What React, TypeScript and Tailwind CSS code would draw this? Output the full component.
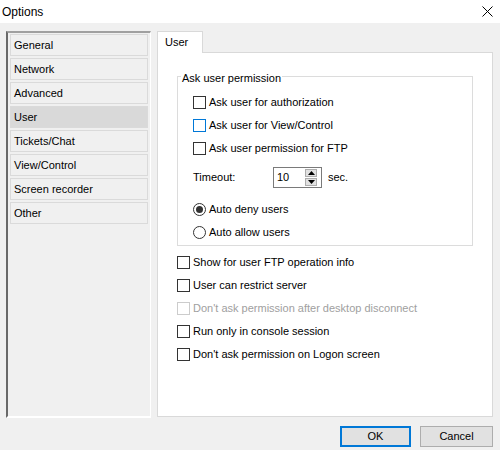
import React from "react";

const menu = [
  "General",
  "Network",
  "Advanced",
  "User",
  "Tickets/Chat",
  "View/Control",
  "Screen recorder",
  "Other",
];

function CheckBox(props: { label: string; focus?: boolean; disabled?: boolean }) {
  const { label, focus, disabled } = props;
  const box = disabled
    ? "border-[#cccccc]"
    : focus
      ? "border-[#0078d7]"
      : "border-[#333333]";
  return (
    <div className="flex h-[23px] items-center">
      <div className={`h-[13px] w-[13px] border bg-white ${box}`} />
      <span className={`ml-[3px] ${disabled ? "text-[#a0a0a0]" : ""}`}>{label}</span>
    </div>
  );
}

function Radio(props: { label: string; checked?: boolean }) {
  return (
    <div className="flex h-[23px] items-center">
      <div className="flex h-[13px] w-[13px] items-center justify-center rounded-full border border-[#333333] bg-white">
        {props.checked && <div className="h-[7px] w-[7px] rounded-full bg-[#333333]" />}
      </div>
      <span className="ml-[3px]">{props.label}</span>
    </div>
  );
}

function Spin() {
  return (
    <div className="flex h-[21px] w-[49px] items-center border border-[#7a7a7a] bg-white">
      <span className="ml-[3px] flex-1">10</span>
      <div className="mr-[4px] flex flex-col gap-[1px]">
        <div className="flex h-[8px] w-[12px] items-center justify-center border border-[#adadad] bg-[#e1e1e1]">
          <svg width="7" height="4" viewBox="0 0 7 4">
            <path d="M0 4 L3.5 0 L7 4 Z" fill="#000" />
          </svg>
        </div>
        <div className="flex h-[8px] w-[12px] items-center justify-center border border-[#adadad] bg-[#e1e1e1]">
          <svg width="7" height="4" viewBox="0 0 7 4">
            <path d="M0 0 L3.5 4 L7 0 Z" fill="#000" />
          </svg>
        </div>
      </div>
    </div>
  );
}

export default function App() {
  return (
    <div className="relative h-[450px] w-[500px] overflow-hidden bg-[#f0f0f0] font-['Liberation_Sans',Arial,sans-serif] text-[11px] text-black">
      {/* title bar */}
      <div className="flex h-[23px] items-center justify-between bg-white">
        <span className="pl-[2px] text-[12px]">Options</span>
        <svg className="mr-[7px]" width="11" height="11" viewBox="0 0 11 11">
          <path d="M0.5 0.5 L10.5 10.5 M10.5 0.5 L0.5 10.5" stroke="#000" strokeWidth="1" />
        </svg>
      </div>

      <div className="flex px-[6px]">
        {/* left list */}
        <div className="mt-[8px] flex h-[387px] w-[145px] flex-col gap-[2px] border-t-2 border-l-2 border-r border-b-2 border-t-[#a0a0a0] border-l-[#696969] border-r-[#ffffff] border-b-[#ffffff] px-[2px] pt-[1px]">
          {menu.map((m) => (
            <div
              key={m}
              className={`flex h-[22px] items-center border border-[#dadada] pl-[3px] ${m === "User" ? "bg-[#d9d9d9]" : ""}`}
            >
              {m}
            </div>
          ))}
        </div>

        {/* right tab panel */}
        <div className="ml-[6px] mt-[8px] flex flex-col">
          <div className="z-10 -mb-[1px] flex h-[22px] w-[46px] items-center border border-b-0 border-[#d9d9d9] bg-white pl-[7px]">
            User
          </div>
          <div className="h-[365px] w-[336px] border border-[#d9d9d9] bg-white pl-[19px]">
            <div className="relative mt-[23px] h-[170px] w-[296px] border border-[#dcdcdc] pl-[15px] pt-[14px]">
              <span className="absolute -top-[7px] left-[3px] bg-white px-[1px]">Ask user permission</span>
              <CheckBox label="Ask user for authorization" />
              <CheckBox label="Ask user for View/Control" focus />
              <CheckBox label="Ask user permission for FTP" />
              <div className="mt-[6px] flex h-[23px] items-center">
                <span className="w-[80px]">Timeout:</span>
                <Spin />
                <span className="ml-[6px]">sec.</span>
              </div>
              <div className="mt-[9px]">
                <Radio label="Auto deny users" checked />
                <Radio label="Auto allow users" />
              </div>
            </div>
            <div className="mt-[5px]">
              <CheckBox label="Show for user FTP operation info" />
              <CheckBox label="User can restrict server" />
              <CheckBox label="Don't ask permission after desktop disconnect" disabled />
              <CheckBox label="Run only in console session" />
              <CheckBox label="Don't ask permission on Logon screen" />
            </div>
          </div>
        </div>
      </div>

      {/* buttons */}
      <div className="mt-[8px] flex justify-end gap-[9px] pr-[7px]">
        <button className="h-[21px] w-[71px] border-2 border-[#0078d7] bg-[#e1e1e1]">OK</button>
        <button className="h-[21px] w-[73px] border border-[#adadad] bg-[#e1e1e1]">Cancel</button>
      </div>
    </div>
  );
}
